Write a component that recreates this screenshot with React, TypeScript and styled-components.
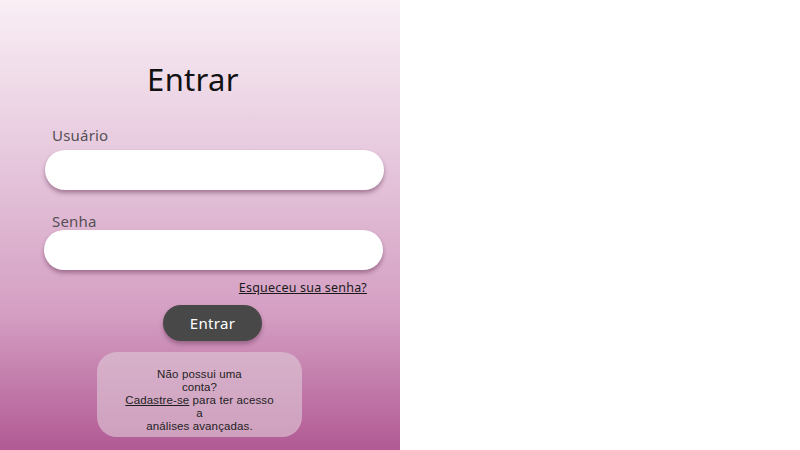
import React from "react";
import styled, { createGlobalStyle } from "styled-components";

const Global = createGlobalStyle`
  html, body { margin: 0; padding: 0; background: #ffffff; }
  body { font-family: "Noto Sans", "Open Sans", sans-serif; }
  * { box-sizing: border-box; }
`;

const Page = styled.div`
  display: flex;
  width: 800px;
  height: 450px;
  background: #ffffff;
`;

const Panel = styled.section`
  width: 400px;
  height: 450px;
  background: linear-gradient(to bottom, #f9eff5 0%, #e6c8dd 35%, #d49ec2 70%, #b15a94 100%);
  display: flex;
  flex-direction: column;
  overflow: hidden;
`;

const Title = styled.h1`
  margin: 59px 0 0 0;
  padding-right: 14px;
  text-align: center;
  font-size: 31px;
  font-weight: 400;
  line-height: 40px;
  color: #111111;
  letter-spacing: 0.3px;
`;

const Form = styled.form`
  display: flex;
  flex-direction: column;
  padding: 0 16px 0 44px;
  margin-top: 26px;
`;

const Label = styled.label<{ $mb: number }>`
  font-size: 15px;
  line-height: 20px;
  color: #555055;
  padding-left: 8px;
  margin-bottom: ${(p) => p.$mb}px;
  letter-spacing: 0.2px;
`;

const Input = styled.input<{ $shift?: number }>`
  width: 339px;
  height: 40px;
  border: none;
  border-radius: 20px;
  background: #ffffff;
  box-shadow: 0 3px 4px rgba(90, 40, 75, 0.45);
  outline: none;
  margin-left: ${(p) => p.$shift ?? 0}px;
  font-family: inherit;
  font-size: 15px;
  padding: 0 18px;
`;

const Gap = styled.div<{ $h: number }>`
  height: ${(p) => p.$h}px;
`;

const Forgot = styled.a`
  align-self: flex-end;
  margin-right: 17px;
  margin-top: 10px;
  font-size: 12.5px;
  line-height: 16px;
  color: #1a1a1a;
  text-decoration: underline;
  letter-spacing: 0.2px;
`;

const Button = styled.button`
  align-self: center;
  margin: 9px 0 0 -3px;
  width: 99px;
  height: 36px;
  border: none;
  border-radius: 18px;
  background: #484848;
  color: #ffffff;
  font-family: inherit;
  font-size: 15px;
  letter-spacing: 0.3px;
  box-shadow: 0 3px 4px rgba(60, 20, 50, 0.35);
`;

const Card = styled.div`
  align-self: center;
  margin: 11px 0 0 -1px;
  width: 205px;
  height: 85px;
  border-radius: 20px;
  background: rgba(222, 200, 214, 0.62);
  display: flex;
  flex-direction: column;
  align-items: center;
  justify-content: flex-start;
  padding-top: 16px;
  font-family: "Liberation Sans", Arial, sans-serif;
  font-size: 11.5px;
  line-height: 12.9px;
  letter-spacing: 0.12px;
  color: #1e1e1e;
  text-align: center;
`;

const Line = styled.span`
  display: block;
`;

const SignUp = styled.a`
  color: #1e1e1e;
  text-decoration: underline;
`;

export default function App() {
  return (
    <>
      <Global />
      <Page>
        <Panel>
          <Title>Entrar</Title>
          <Form onSubmit={(e) => e.preventDefault()}>
            <Label $mb={5}>Usuário</Label>
            <Input $shift={1} />
            <Gap $h={21} />
            <Label $mb={-1}>Senha</Label>
            <Input />
            <Forgot href="#">Esqueceu sua senha?</Forgot>
            <Button type="submit">Entrar</Button>
          </Form>
          <Card>
            <Line>Não possui uma</Line>
            <Line>conta?</Line>
            <Line>
              <SignUp href="#">Cadastre-se</SignUp> para ter acesso
            </Line>
            <Line>a</Line>
            <Line>análises avançadas.</Line>
          </Card>
        </Panel>
      </Page>
    </>
  );
}
